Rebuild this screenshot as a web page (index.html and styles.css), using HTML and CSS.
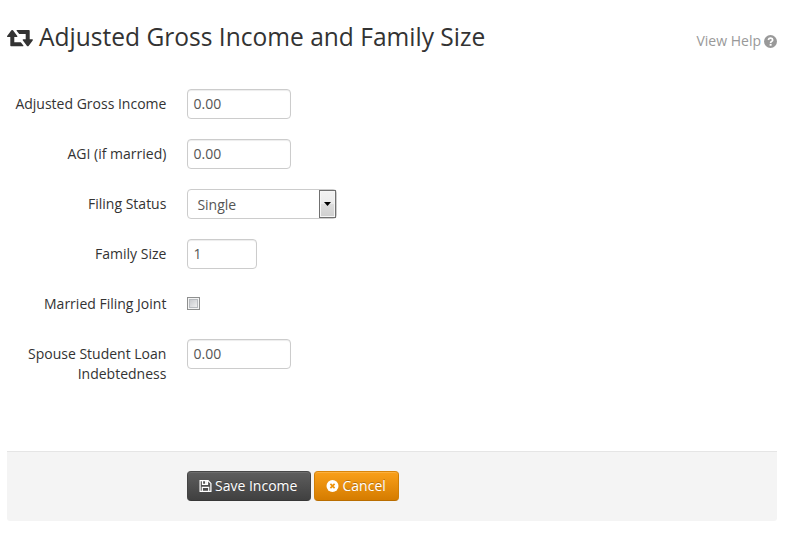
FILE: index.html
```html
<!DOCTYPE html>
<html lang="en">
<head>
<meta charset="utf-8">
<title>Adjusted Gross Income and Family Size</title>
<link rel="stylesheet" href="styles.css">
</head>
<body>
<header class="page-header">
  <h1 class="title">
    <svg class="icon-retweet" viewBox="0 0 26 18" aria-hidden="true"><path d="M16.1 17.3H4Q3.3 17.3 3.3 16.6V8H.8Q-.4 7.8.3 6.7L4.4 1.3Q5.2.5 6 1.3L10.1 6.7Q10.8 7.8 9.6 8H7.3V13.3H13.8L16.4 16.6Q16.6 17.1 16.1 17.3ZM9.9 1H22Q22.7 1 22.7 1.7V10.2H25.2Q26.4 10.4 25.7 11.5L21.6 16.9Q20.8 17.7 20 16.9L15.9 11.5Q15.2 10.4 16.4 10.2H18.7V5H12.2L9.6 1.7Q9.4 1.2 9.9 1Z"/></svg>
    <span>Adjusted Gross Income and Family Size</span>
  </h1>
  <a class="help"><span>View Help</span>
    <svg class="icon-help" viewBox="0 0 12 12" aria-hidden="true"><circle cx="6" cy="6" r="6" fill="#999"/><path d="M3.9 4.5Q4.6 2.8 6.2 2.9 8 3.1 8 4.5 8 5.4 6.9 6 6.1 6.4 6.1 7.3" fill="none" stroke="#fff" stroke-width="1.6"/><path d="M5.2 8.2h1.8v1.7H5.2z" fill="#fff"/></svg>
  </a>
</header>
<form class="form">
  <div class="row"><label class="label" for="agi">Adjusted Gross Income</label><input class="input" id="agi" type="text" value="0.00"></div>
  <div class="row"><label class="label" for="agi-married">AGI (if married)</label><input class="input" id="agi-married" type="text" value="0.00"></div>
  <div class="row"><label class="label">Filing Status</label><div class="select"><span class="select-value">Single</span><span class="select-button"><svg class="arrow" viewBox="0 0 7 4" aria-hidden="true"><path d="M0 0h7L3.5 4z"/></svg></span></div></div>
  <div class="row"><label class="label" for="size">Family Size</label><input class="input input-small" id="size" type="text" value="1"></div>
  <div class="row"><label class="label" for="joint">Married Filing Joint</label><input class="checkbox" id="joint" type="checkbox"></div>
  <div class="row"><label class="label" for="spouse">Spouse Student Loan Indebtedness</label><input class="input" id="spouse" type="text" value="0.00"></div>
  <div class="actions">
    <button class="btn btn-save" type="button"><svg class="icon-save" viewBox="0 0 12 12" aria-hidden="true"><path d="M.6.6H8.6L11.4 3.4V11.4H.6ZM3 .6V4.4H8V.6M2.8 11.4V7.4H9.2V11.4" fill="none" stroke="#fff" stroke-width="1.25"/><path d="M5.6 1H7.4V3.9H5.6z" fill="#fff"/></svg><span>Save Income</span></button>
    <button class="btn btn-cancel" type="button"><svg class="icon-cancel" viewBox="0 0 12 12" aria-hidden="true"><circle cx="6" cy="6" r="6" fill="#fff"/><path d="M3.9 3.9l4.2 4.2M8.1 3.9L3.9 8.1" stroke="#ee930c" stroke-width="1.7"/></svg><span>Cancel</span></button>
  </div>
</form>
</body>
</html>
```
FILE: styles.css
```css
* { box-sizing: border-box; }
body {
  margin: 0;
  padding: 17px 30px 0 7px;
  background: #fff;
  color: #333;
  font: 14px/20px "Open Sans", sans-serif;
}
.page-header {
  display: flex;
  justify-content: space-between;
  height: 72px;
}
.title {
  display: flex;
  margin: 0;
  font-size: 24.55px;
  font-weight: 400;
  line-height: 40px;
}
.icon-retweet {
  width: 26px;
  height: 18px;
  margin: 12px 6px 0 0;
  fill: #333;
}
.help {
  display: flex;
  align-items: center;
  gap: 3px;
  height: 20px;
  margin-top: 14px;
  color: #999;
}
.icon-help { width: 13px; height: 13px; }
.form { margin: 0; }
.row {
  display: flex;
  align-items: flex-start;
  height: 50px;
}
.label {
  width: 159.4px;
  margin-right: 20.6px;
  padding-top: 5px;
  text-align: right;
}
.input {
  width: 104px;
  height: 30px;
  padding: 3px 6px 5px 5.5px;
  border: 1px solid #ccc;
  border-radius: 4px;
  background: #fff;
  box-shadow: inset 0 1px 1px rgba(0, 0, 0, .075);
  color: #555;
  font: inherit;
}
.input-small { width: 70px; }
.select {
  display: flex;
  justify-content: space-between;
  width: 150px;
  height: 30px;
  border: 1px solid #ccc;
  border-radius: 4px;
  color: #555;
}
.select-value { padding: 5px 0 0 9.4px; }
.select-button {
  display: flex;
  align-items: center;
  justify-content: center;
  width: 17px;
  height: 28px;
  border: 1px solid #707070;
  background: linear-gradient(#f2f2f2 0, #ebebeb 50%, #ddd 50%, #cfcfcf 100%);
  box-shadow: inset 0 0 0 1px #f5f5f5;
}
.arrow { width: 7px; height: 4px; fill: #000; }
.checkbox {
  width: 13px;
  height: 13px;
  margin: 8px 0 0;
  padding: 1px;
  appearance: none;
  border: 1px solid #8e8f8f;
  background: linear-gradient(135deg, #c4c6ca, #f3f3f3) content-box, #f4f4f4;
  outline: 1px solid #b8bbbf;
  outline-offset: -3px;
}
.actions {
  display: flex;
  gap: 3px;
  height: 70px;
  margin-top: 62px;
  padding: 19px 0 0 180px;
  border-top: 1px solid #e5e5e5;
  border-radius: 0 0 3px 3px;
  background: #f4f4f4;
}
.btn {
  display: flex;
  align-items: center;
  gap: 3px;
  height: 30px;
  padding: 0 12px 0 11px;
  border: 1px solid;
  border-radius: 4px;
  color: #fff;
  font: inherit;
  text-shadow: 0 -1px 0 rgba(0, 0, 0, .25);
}
.btn-save {
  width: 124px;
  border-color: #484848 #444 #373737;
  background: linear-gradient(#5e5e5e, #404040);
  box-shadow: inset 0 1px 0 #6d6d6d;
}
.btn-cancel {
  gap: 3.5px;
  width: 85px;
  border-color: #d98509 #d07e05 #b96d00;
  background: linear-gradient(#faa01a, #d57c00);
  box-shadow: inset 0 1px 0 #fbb03f;
}
.icon-save { width: 13px; height: 12px; flex: none; }
.icon-cancel { width: 13px; height: 12px; flex: none; }
.btn span { white-space: nowrap; }
```
